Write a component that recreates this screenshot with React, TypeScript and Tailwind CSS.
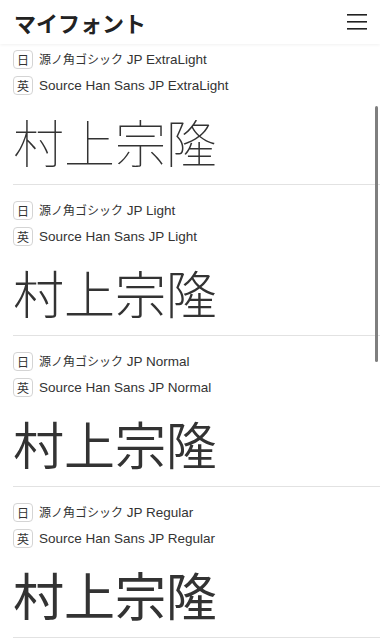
import React from "react";

const fonts = [
  { w: "ExtraLight", cls: "font-['Noto_Sans_CJK_JP_Thin','Noto_Sans_CJK_JP',sans-serif] font-thin" },
  { w: "Light", cls: "font-['Noto_Sans_CJK_JP_Light','Noto_Sans_CJK_JP',sans-serif] font-light" },
  { w: "Normal", cls: "font-['Noto_Sans_CJK_JP_DemiLight','Noto_Sans_CJK_JP',sans-serif] font-[350]" },
  { w: "Regular", cls: "font-['Noto_Sans_CJK_JP',sans-serif] font-normal" },
];

function Badge({ c }: { c: string }) {
  return (
    <span className="flex h-[19px] w-[20px] items-center justify-center rounded-[4px] border border-[#d4d4d4] font-['Noto_Sans_CJK_JP',sans-serif] text-[12px] leading-none text-[#333]">
      {c}
    </span>
  );
}

export default function App() {
  return (
    <div className="relative h-[640px] w-[380px] overflow-hidden bg-white font-['Liberation_Sans','Noto_Sans_CJK_JP',sans-serif] text-[#333]">
      <header className="flex h-[44px] items-center justify-between pl-[14px] pr-[13px] shadow-[0_1px_3px_rgba(0,0,0,0.06)]">
        <h1 className="font-['Noto_Sans_CJK_JP',sans-serif] text-[22px] font-bold leading-none text-[#222]">
          マイフォント
        </h1>
        <svg width="20" height="18" viewBox="0 0 20 18" className="text-[#222]">
          <rect x="0" y="1" width="20" height="1.6" fill="currentColor" />
          <rect x="0" y="8" width="20" height="1.6" fill="currentColor" />
          <rect x="0" y="15" width="20" height="1.6" fill="currentColor" />
        </svg>
      </header>
      <main className="pl-[13px]">
        {fonts.map((f, i) => (
          <section key={i} className={`border-b border-[#e2e2e2] pb-[15px] ${i === 0 ? "pt-[6px]" : "pt-[16px]"}`}>
            <div className="flex flex-col gap-[7px]">
              <div className="flex items-center gap-[6px]">
                <Badge c="日" />
                <span className="text-[13.5px] leading-none">
                  <span className="font-['Noto_Sans_CJK_JP',sans-serif] text-[12px]">源ノ角ゴシック</span> JP {f.w}
                </span>
              </div>
              <div className="flex items-center gap-[6px]">
                <Badge c="英" />
                <span className="text-[13.5px] leading-none">Source Han Sans JP {f.w}</span>
              </div>
            </div>
            <div className={`mt-[18px] h-[56px] text-[51px] leading-[56px] ${f.cls}`}>
              村上宗隆
            </div>
          </section>
        ))}
      </main>
      <div className="absolute left-[375px] top-[106px] h-[256px] w-[3px] rounded-full bg-[#7f7f7f]" />
    </div>
  );
}
